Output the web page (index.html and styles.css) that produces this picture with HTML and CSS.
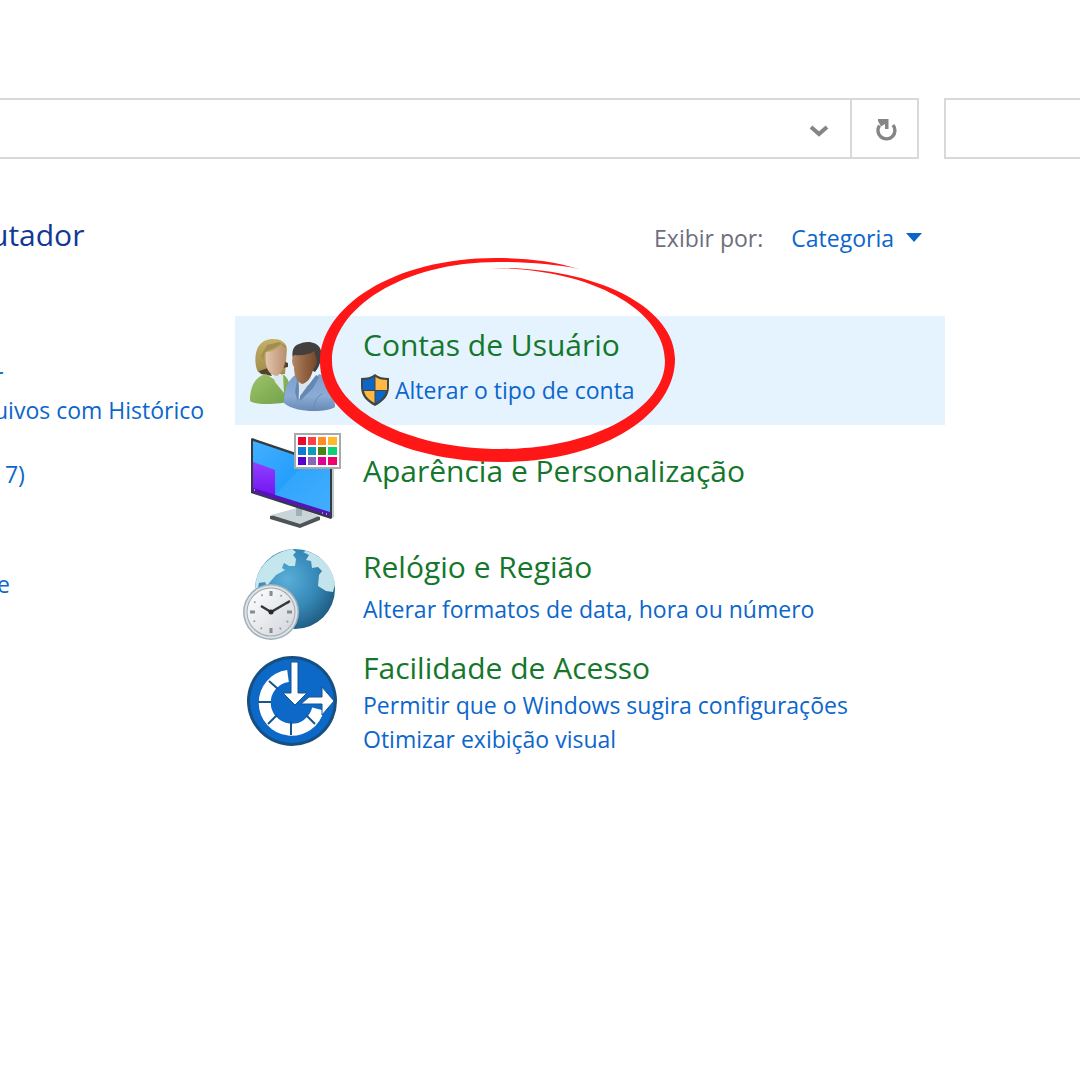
FILE: index.html
```html
<!DOCTYPE html>
<html lang="pt-BR">
<head>
<meta charset="utf-8">
<meta name="viewport" content="width=device-width, initial-scale=1">
<title>Painel de Controle</title>
<link rel="stylesheet" href="styles.css">
</head>
<body>
<header class="toolbar">
  <div class="address">
    <input class="address-input" type="text" aria-label="Endereço">
    <button class="address-toggle" type="button" aria-label="Locais anteriores">
      <svg width="20" height="14" viewBox="0 0 20 14"><path d="M2 3l8 7 8-7" fill="none" stroke="#858585" stroke-width="4"/></svg>
    </button>
    <button class="address-refresh" type="button" aria-label="Atualizar">
      <svg width="24" height="26" viewBox="0 0 24 26"><path d="M5.500 8.500A8.500 8.500 0 1 0 19 8" fill="none" stroke="#858585" stroke-width="3.400"/><path d="M4 2h10.500v10H11V7L7 9.500 4 4z" fill="#858585"/></svg>
    </button>
  </div>
  <input class="search" type="search" aria-label="Pesquisar">
</header>
<main>
  <div class="heading-row">
    <h1>utador</h1>
    <div class="view">
      <span>Exibir por:</span>
      <button class="view-button" type="button">Categoria
        <svg width="16" height="10" viewBox="0 0 16 10"><path d="M0 0h16L8 9z" fill="#0a64cc"/></svg>
      </button>
    </div>
  </div>
  <div class="columns">
    <nav class="side">
      <div class="side-group"><a href="#">r</a><a href="#">uivos com Histórico</a></div>
      <div class="side-group side-group-backup"><a href="#">s 7)</a></div>
      <div class="side-group side-group-last"><a href="#">e</a></div>
    </nav>
    <div class="categories">
      <section class="category selected">
        <svg class="icon" viewBox="0 0 110 100">
          <defs>
            <linearGradient id="face1"><stop stop-color="#e3c6ad"/><stop offset="1" stop-color="#b98e70"/></linearGradient>
            <linearGradient id="face2"><stop stop-color="#b38666"/><stop offset=".5" stop-color="#936442"/><stop offset="1" stop-color="#76492c"/></linearGradient>
            <linearGradient id="hair1" x2="0" y2="1"><stop stop-color="#c4b067"/><stop offset="1" stop-color="#a28c4b"/></linearGradient>
            <linearGradient id="green" x2="1" y2="1"><stop stop-color="#a0c46a"/><stop offset="1" stop-color="#6f9f48"/></linearGradient>
            <linearGradient id="blue" x2="0" y2="1"><stop stop-color="#7e9fcb"/><stop offset=".6" stop-color="#8bacd5"/><stop offset="1" stop-color="#6788b4"/></linearGradient>
          </defs>
          <path d="M23 47c-3-5-4-17 0-25 4-6 9-8 15-8 8 0 13 3 14 10l-2 25H27z" fill="url(#hair1)"/>
          <path d="M24 46l9-3 4 8-11-2zM48 36l5 2v4l-5 1z" fill="#51422b"/>
          <path d="M15 76c0-13 4-24 16-27l9 6 7-6c7 3 9 11 9 27-9 3-35 5-41 0z" fill="url(#green)"/>
          <path d="M38 50h10l1 18-9-11z" fill="#dceaf0"/>
          <path d="M31 27c6 0 12-3 15-7 1 3 4 4 5 5 0 11-1 21-9 26-8-1-13-8-11-24z" fill="url(#face1)"/>
          <path d="M29 35c-1-6 1-9 5-10 6-2 10-4 12-6l5 5v-3l-7-4-12 3-6 11z" fill="#a18d51"/>
          <path d="M59 37c-3-8-2-16 5-18 8-4 18-2 21 4 3 6 1 17-5 24z" fill="#423f3e"/>
          <path d="M49 78c0-14 4-24 13-29l12 12 10-12c11 3 16 12 16 33-9 6-40 6-51-4z" fill="url(#blue)"/>
          <path d="M63 52h14l-4 8-9 14z" fill="#d7e6ef"/>
          <path d="M60 67l3-17 1 14-1 13zM65 71l10-13 6-8 3 2-6 11-13 13z" fill="#6687af"/>
          <path d="M59 42c-3-5-2-9 0-12 9 1 17-1 20-4 1 4 4 9 2 14l-3 5c-2 8-6 13-11 14-5-2-8-8-8-17z" fill="url(#face2)"/>
          <path d="M79 83c0-7 4-12 8-14" fill="none" stroke="#6789b5"/>
        </svg>
        <div class="category-text">
          <h2><a href="#">Contas de Usuário</a></h2>
          <a class="task" href="#"><svg class="shield" viewBox="0 0 28 32"><path d="M14 0c4 3 8 4 14 4v9c0 9-6 15-14 19C6 28 0 22 0 13V4c6 0 10-1 14-4z" fill="#424545"/><path d="M13.500 3v13H2V6c5 0 8-1 11.500-3z" fill="#0b66c5"/><path d="M14.500 3c3 2 6 3 11.500 3v10H14.500zM3 17h10.500v12C8 26 4 22 3 17z" fill="#ffb940"/><path d="M14.500 17H25c-1 5-5 9-10.500 12z" fill="#0b66c5"/></svg>Alterar o tipo de conta</a>
        </div>
        <svg class="marker" viewBox="0 0 360 210" aria-hidden="true"><path d="M261 13C235 5 207 2 178 2 75 2 2 51 2 106c0 55 78 100 181 100s174-48 174-103C357 51 277 10 172 12c103 0 175 43 175 93 0 48-72 88-164 88C90 193 14 154 14 105 14 52 85 6 180 6c29 0 56 2 81 7z" fill="#ff1616"/></svg>
      </section>
      <section class="category appearance">
        <svg class="icon" viewBox="0 0 110 100">
          <defs><linearGradient id="screen" x2="1" y2="1"><stop stop-color="#43afff"/><stop offset=".5" stop-color="#249ffc"/><stop offset="1" stop-color="#39a9ff"/></linearGradient><linearGradient id="purple" x2="0" y2="1"><stop stop-color="#9140ff"/><stop offset="1" stop-color="#7010f0"/></linearGradient></defs>
          <path d="M35 83l29-7 21 8v3l-20 8-30-9z" fill="#4d5357"/><path d="M36 82l26-7 22 8-19 8z" fill="#c9d4d9"/><path d="M61 71l6 2v10h-6z" fill="#a0afb8"/>
          <path d="M16 6l1-1 80 27v53l-1 1-80-26z" fill="#343b41"/><path d="M97 32l2-1v53l-2 1z" fill="#c1c6c9"/>
          <path d="M18 8l77 26v48L18 58z" fill="url(#screen)"/><path d="M18 29l22 8v29l-22-7z" fill="url(#purple)"/><path d="M18 55l77 24v4L18 59z" fill="#5514b5"/><path d="M19 57h1M87 80h1M91 81h1" stroke="#fff"/>
          <path d="M40 62L74 26l21 8v45z" fill="#69c2ff" opacity=".2"/>
          <path d="M60 1h45v34H60z" fill="#fff" stroke="#a7a9aa" stroke-width="2"/>
          <g><path d="M63 4h8v8h-8z" fill="#e9092e"/><path d="M73 4h8v8h-8z" fill="#ff4049"/><path d="M83 4h8v8h-8z" fill="#ff8d21"/><path d="M93 4h9v8h-9z" fill="#ffb829"/><path d="M63 14h8v8h-8z" fill="#1279d7"/><path d="M73 14h8v8h-8z" fill="#0c9bb8"/><path d="M83 14h8v8h-8z" fill="#478412"/><path d="M93 14h9v8h-9z" fill="#0dd177"/><path d="M63 24h8v8h-8z" fill="#5500cc"/><path d="M73 24h8v8h-8z" fill="#8b65b8"/><path d="M83 24h8v8h-8z" fill="#e00093"/><path d="M93 24h9v8h-9z" fill="#f0006b"/></g>
        </svg>
        <div class="category-text"><h2><a href="#">Aparência e Personalização</a></h2></div>
      </section>
      <section class="category clock">
        <svg class="icon" viewBox="0 0 110 100">
          <defs><radialGradient id="globe" cx=".4" cy=".38" r=".65"><stop stop-color="#59afd9"/><stop offset=".6" stop-color="#3587b6"/><stop offset="1" stop-color="#205d83"/></radialGradient><linearGradient id="dial" x2="1" y2="1"><stop stop-color="#fff"/><stop offset="1" stop-color="#d1d5db"/></linearGradient></defs>
          <circle cx="60" cy="45" r="40" fill="url(#globe)"/>
          <path d="M21 37C25 19 40 8 57 5l4 3-3 3 3 4-1 7h-6l-5-3-2 5 3 2-9 5-6 7-3 4-2-4-6 1-1 5 6 1 2 7-2 2-6-8-3-1z" fill="#c4e6ed"/><path d="M71 7c15 4 27 16 29 33l-2 8-7-1-8-5 1-11 3-4-4-4-6 1-1-7-5-1 3-5-6-3z" fill="#c3e4ec"/><path d="M30 42l6 2 2 4-6-1z" fill="#d8eff3"/>
          <circle cx="36" cy="68" r="28" fill="#a3b0b9"/><circle cx="36" cy="68" r="26.500" fill="#d9e3e8"/><circle cx="36" cy="68" r="24.500" fill="#a2abb1"/><circle cx="36" cy="68" r="23.500" fill="url(#dial)"/>
          <circle cx="36" cy="68" r="19" fill="none" stroke="#92989d" stroke-width="2" stroke-dasharray="1.500 8.450" stroke-dashoffset=".75"/>
          <path d="M36 47v5M36 84v5M15 68h5M52 68h5" stroke="#858c92" stroke-width="3"/><path d="M26 62l10 6 19-11" fill="none" stroke="#34383b" stroke-width="2.500"/><circle cx="36" cy="68" r="2.500" fill="#262a2d"/>
        </svg>
        <div class="category-text"><h2><a href="#">Relógio e Região</a></h2><a class="task" href="#">Alterar formatos de data, hora ou número</a></div>
      </section>
      <section class="category access">
        <svg class="icon" viewBox="0 0 110 100">
          <circle cx="57" cy="51" r="45" fill="#164f82"/><circle cx="57" cy="51" r="42" fill="#0d69c8"/>
          <path d="M53 26A27 27 0 1 0 83 59" fill="none" stroke="#fff" stroke-width="12"/>
          <path d="M34 31l9 8M23 52h13M33 74l9-9M56 85V71M71 65l9 9" stroke="#17558b" stroke-width="2"/>
          <path d="M56 12h7v31h9L60 55 48 43h8zM66 54l8-7h13V37l12 14-12 14v-11z" fill="#fff" stroke="#17558b" stroke-width="1"/>
        </svg>
        <div class="category-text"><h2><a href="#">Facilidade de Acesso</a></h2><a class="task" href="#">Permitir que o Windows sugira configurações</a><a class="task" href="#">Otimizar exibição visual</a></div>
      </section>
    </div>
  </div>
</main>
</body>
</html>
```
FILE: styles.css
```css
* { box-sizing: border-box; }
body {
  margin: 0;
  padding-top: 98px;
  background: #fff;
  color: #6e6e7d;
  font: 23px/34px "Open Sans", "Noto Sans", sans-serif;
  overflow-x: hidden;
}
button, input { margin: 0; padding: 0; border: 0; background: none; font: inherit; color: inherit; }
a { color: #0c66cc; text-decoration: none; }
svg { display: block; flex: none; }
h1, h2 { margin: 0; font-size: 30px; line-height: 40px; font-weight: 400; }
h1 { color: #103a94; }
h2 a { color: #14772b; }

.toolbar { display: flex; gap: 25px; height: 61px; }
.address { display: flex; flex: 1; border: 2px solid #d9d9d9; border-left: 0; }
.address-input { flex: 1; min-width: 0; }
.address-toggle { display: grid; place-items: center; width: 62px; padding-top: 4px; }
.address-refresh { display: grid; place-items: center; width: 67px; padding: 2px 0 0 2px; border-left: 2px solid #d9d9d9; }
.search { width: 136px; border: 2px solid #d9d9d9; border-right: 0; border-radius: 0; }

.heading-row { display: flex; justify-content: space-between; align-items: center; padding: 56px 158px 0 0; }
.heading-row h1 { margin-left: -10px; }
.view { display: flex; gap: 28px; padding-top: 6px; }
.view-button { display: flex; align-items: center; gap: 12px; color: #0c66cc; }

.columns { display: flex; padding: 61px 135px 0 0; }
.side { width: 235px; flex: none; padding-top: 43px; white-space: nowrap; }
.side-group { margin: 0 0 30px -6px; }
.side-group a { display: block; }
.side-group-backup { margin-left: -12px; }
.side-group-last { margin-top: 76px; margin-left: -3px; }

.categories { flex: 1; min-width: 0; }
.category { position: relative; display: flex; gap: 18px; }
.icon { width: 110px; height: 100px; }
.category-text { white-space: nowrap; }
.task { display: flex; align-items: center; }
.selected { height: 109px; padding-top: 9px; background: #e5f3ff; }
.selected .task { gap: 6px; margin: 8px 0 0 -2px; }
.shield { width: 28px; height: 32px; }
.appearance { padding-top: 8px; }
.appearance .category-text { padding-top: 18px; }
.clock { padding-top: 11px; }
.clock .category-text { padding-top: 3px; }
.clock .task { margin-top: 5px; }
.access { padding-top: 6px; }
.access .category-text { margin-top: -2px; }

.marker { position: absolute; z-index: 1; left: 83px; top: -60px; width: 360px; height: 210px; pointer-events: none; }
```
